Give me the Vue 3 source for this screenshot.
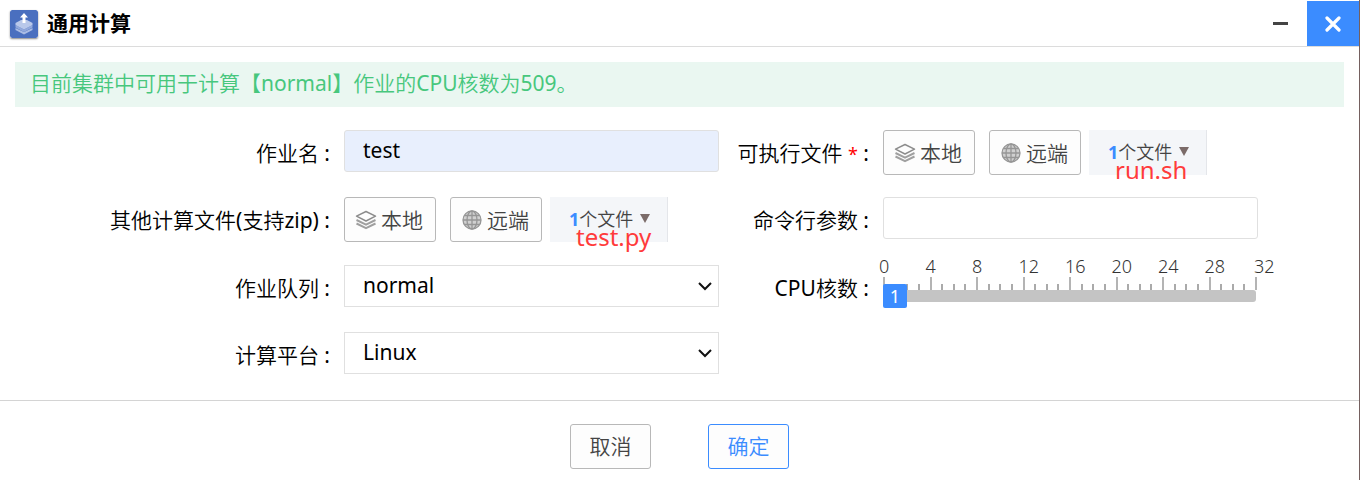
<script setup>
import { ref } from 'vue'

const jobName = ref('test')
const args = ref('')
const queue = ref('normal')
const platform = ref('Linux')
const cores = ref(1)
const marks = [0, 4, 8, 12, 16, 20, 24, 28]
</script>

<template>
  <main class="dialog">
    <header class="head">
      <svg class="logo" viewBox="0 0 28 28" aria-hidden="true">
        <rect width="28" height="28" rx="2" fill="#4a6fbf" />
        <path d="M5.500 18v2l8.500 4.500 8.500-4.500v-2L14 22z" fill="#a9bbe4" />
        <path d="M5.500 15v2.500L14 22l8.500-4.500V15L14 19.500z" fill="#92a9dc" />
        <path d="M5.500 13l5.500-3h6l5.500 3v2L14 19.500 5.500 15z" fill="#b9c8ea" />
        <path d="M14 3l4 4.500h-2.500V13h-3V7.500H10z" fill="#fff" />
      </svg>
      <h1>通用计算</h1>
      <button class="win min" type="button" aria-label="最小化">
        <svg viewBox="0 0 16 16"><path d="M0 7.500h15" stroke="#444" stroke-width="3" /></svg>
      </button>
      <button class="win close" type="button" aria-label="关闭">
        <svg viewBox="0 0 16 16"><path d="M2 2l12 12M14 2L2 14" stroke="#fff" stroke-width="3.200" stroke-linecap="round" /></svg>
      </button>
    </header>

    <p class="notice">目前集群中可用于计算【normal】作业的CPU核数为509。</p>

    <form id="job" class="form" @submit.prevent>
      <label class="label" for="name">作业名 :</label>
      <input id="name" v-model="jobName" class="field filled" type="text" />

      <span id="exec-label" class="label">可执行文件 <span class="star">*</span> :</span>
      <div class="files" role="group" aria-labelledby="exec-label">
        <button class="btn pick" type="button">
          <svg class="ico" viewBox="0 0 22 22" fill="none" stroke="#8d8d8d" stroke-width="1.500" stroke-linejoin="round"><path d="M11 2.500L20.500 7.200 11 12 1.500 7.200z" /><path d="M1.500 11l9.500 4.700 9.500-4.700M1.500 14.500l9.500 4.700 9.500-4.700" stroke-width="2" stroke="#a0a0a0" /></svg>本地
        </button>
        <button class="btn pick" type="button">
          <svg class="ico" viewBox="0 0 22 22" fill="none" stroke="#969696" stroke-width="1.300"><circle cx="11" cy="11" r="9" fill="#d0d0d0" /><path d="M11 2v18M2 11h18M3.500 6.500h15M3.500 15.500h15" /><ellipse cx="11" cy="11" rx="5" ry="9" /></svg>远端
        </button>
        <div class="chip">
          <button class="count" type="button"><b>1</b>个文件<svg class="tri" viewBox="0 0 10 9"><path d="M0 0h10L5 9z" fill="#7b6b69" /></svg></button>
          <span class="tag">run.sh</span>
        </div>
      </div>

      <span id="other-label" class="label">其他计算文件(支持zip) :</span>
      <div class="files" role="group" aria-labelledby="other-label">
        <button class="btn pick" type="button">
          <svg class="ico" viewBox="0 0 22 22" fill="none" stroke="#8d8d8d" stroke-width="1.500" stroke-linejoin="round"><path d="M11 2.500L20.500 7.200 11 12 1.500 7.200z" /><path d="M1.500 11l9.500 4.700 9.500-4.700M1.500 14.500l9.500 4.700 9.500-4.700" stroke-width="2" stroke="#a0a0a0" /></svg>本地
        </button>
        <button class="btn pick" type="button">
          <svg class="ico" viewBox="0 0 22 22" fill="none" stroke="#969696" stroke-width="1.300"><circle cx="11" cy="11" r="9" fill="#d0d0d0" /><path d="M11 2v18M2 11h18M3.500 6.500h15M3.500 15.500h15" /><ellipse cx="11" cy="11" rx="5" ry="9" /></svg>远端
        </button>
        <div class="chip">
          <button class="count" type="button"><b>1</b>个文件<svg class="tri" viewBox="0 0 10 9"><path d="M0 0h10L5 9z" fill="#7b6b69" /></svg></button>
          <span class="tag">test.py</span>
        </div>
      </div>

      <label class="label" for="args">命令行参数 :</label>
      <input id="args" v-model="args" class="field" type="text" />

      <label class="label" for="queue">作业队列 :</label>
      <div class="drop">
        <select id="queue" v-model="queue" class="field">
          <option>normal</option>
        </select>
        <svg class="chev" viewBox="0 0 14 10"><path d="M1 2l6 6 6-6" /></svg>
      </div>

      <label class="label" for="cores">CPU核数 :</label>
      <div class="slider">
        <div class="scale" aria-hidden="true">
          <div v-for="m in marks" :key="m" class="seg">
            <span class="num">{{ m }}</span>
            <div class="ticks"><i class="major"></i><i></i><i></i><i></i></div>
          </div>
          <div class="seg last">
            <span class="num">32</span>
            <div class="ticks"><i class="major"></i></div>
          </div>
        </div>
        <div class="rail">
          <input id="cores" v-model.number="cores" type="range" min="1" max="32" />
          <output class="value" for="cores" :style="{ left: `calc((100% - 24px) * ${(cores - 1) / 31})` }">{{ cores }}</output>
        </div>
      </div>

      <label class="label" for="platform">计算平台 :</label>
      <div class="drop">
        <select id="platform" v-model="platform" class="field">
          <option>Linux</option>
        </select>
        <svg class="chev" viewBox="0 0 14 10"><path d="M1 2l6 6 6-6" /></svg>
      </div>
    </form>

    <footer class="foot">
      <button class="btn" type="button">取消</button>
      <button class="btn primary" type="submit" form="job">确定</button>
    </footer>
  </main>
</template>

<style>
body {
  background: #fff;
}
</style>

<style scoped>
.dialog,
.dialog * {
  box-sizing: border-box;
}
.dialog {
  min-height: 100vh;
  border-right: 1px solid #75605f;
  background: #fff;
  color: #000;
  font-family: "Noto Sans", "Noto Sans CJK SC DemiLight", "Noto Sans CJK SC Light", "Noto Sans CJK SC", sans-serif;
  font-size: 21px;
  font-weight: 400;
  line-height: 30px;
}
button,
input,
select {
  margin: 0;
  font: inherit;
  color: inherit;
}
button {
  padding: 0;
  cursor: pointer;
}
.head {
  display: flex;
  align-items: center;
  height: 47px;
  padding: 1px 0 0 10px;
  border-bottom: 1px solid #dcdcdc;
}
.logo {
  width: 28px;
  height: 28px;
  border-radius: 2px;
  box-shadow: 0 1px 2px #888;
}
h1 {
  flex: 1;
  margin: 0 0 0 9px;
  padding-bottom: 2px;
  font-family: "Noto Sans", "Noto Sans CJK SC", sans-serif;
  font-size: 21px;
  font-weight: 700;
}
.win {
  display: flex;
  align-items: center;
  justify-content: center;
  width: 53px;
  height: 45px;
  border: 0;
  background: none;
}
.win svg {
  width: 16px;
  height: 16px;
}
.close {
  width: 52px;
  background: #3b8cff;
}
.notice {
  margin: 15px 15px 0;
  padding: 6px 15px 9px;
  background: #eaf7f1;
  color: #47c77d;
}
.form {
  display: grid;
  grid-template-columns: minmax(0, 344fr) minmax(0, 375fr) minmax(0, 164fr) minmax(0, 375fr) minmax(0, 101fr);
  grid-template-rows: 45px 46px 45px 45px;
  row-gap: 22px;
  padding: 23px 0;
}
.label {
  padding: 8px 14px 0 0;
  text-align: right;
  white-space: nowrap;
}
.form > .label:nth-child(4n + 1) {
  grid-column: 1;
}
.star {
  color: #f00;
  font-size: 18px;
}
.field {
  display: block;
  width: 100%;
  height: 42px;
  padding: 0 18px 2px;
  border: 1px solid #e0e0e0;
  border-radius: 3px;
  background: #fff;
  outline: 0;
}
.filled {
  background: #e8effd;
}
.drop {
  position: relative;
}
select.field {
  appearance: none;
  padding: 0 36px 2px 18px;
  border-radius: 0;
}
.chev {
  position: absolute;
  top: 16px;
  right: 7px;
  width: 14px;
  height: 10px;
  fill: none;
  stroke: #111;
  stroke-width: 2;
  pointer-events: none;
}
.files {
  display: flex;
}
.btn {
  height: 45px;
  padding-bottom: 2px;
  border: 1px solid #b8b8b8;
  border-radius: 3px;
  background: #fdfdfd;
  color: #444;
}
.pick {
  display: flex;
  align-items: center;
  padding: 0 0 0 10px;
  gap: 4px;
  width: 92px;
}
.pick + .pick {
  margin-left: 14px;
}
.ico {
  width: 22px;
  height: 22px;
}
.chip {
  position: relative;
  width: 118px;
  margin-left: 8px;
}
.count {
  display: flex;
  align-items: center;
  width: 100%;
  height: 45px;
  padding: 0 0 2px 19px;
  border: 0;
  border-right: 1px solid #e4e6ea;
  background: #f4f6f9;
  color: #444;
  font-size: 18px;
}
.count b {
  color: #3b8cff;
  font-weight: 700;
}
.tri {
  width: 10px;
  height: 9px;
  margin-left: 7px;
}
.tag {
  position: absolute;
  top: 25px;
  left: 26px;
  color: #ff3b3b;
  font-size: 24px;
}
.slider {
  margin-top: -9px;
}
.scale {
  display: flex;
  margin-right: 2px;
}
.seg {
  flex: 1;
}
.last {
  flex: none;
  width: 1px;
}
.num {
  display: block;
  margin-left: -4px;
  color: #333;
  font-size: 18px;
  font-weight: 300;
  line-height: 21px;
}
.last .num {
  margin-left: -1px;
}
.ticks {
  display: flex;
  align-items: flex-end;
  height: 13px;
}
.ticks i {
  flex: 1;
  height: 6px;
  border-left: 2px solid #aaa;
}
.ticks .major {
  height: 13px;
  border-color: #b4b4b4;
}
.rail {
  position: relative;
  height: 12px;
  margin-right: 2px;
}
.rail input {
  display: block;
  width: 100%;
  height: 12px;
  appearance: none;
  border-radius: 3px;
  background: #c4c4c4;
  outline: 0;
}
.rail input::-webkit-slider-thumb {
  appearance: none;
  width: 24px;
  height: 24px;
  border-radius: 2px;
  background: #3b8cff;
}
.value {
  position: absolute;
  top: -6px;
  width: 24px;
  color: #fff;
  font-size: 18px;
  line-height: 24px;
  text-align: center;
  pointer-events: none;
}
.foot {
  display: flex;
  justify-content: center;
  gap: 57px;
  padding: 23px 0 11px;
  border-top: 1px solid #d4d4d4;
}
.foot .btn {
  width: 81px;
}
.foot .primary {
  border-color: #3b8cff;
  color: #3b8cff;
}
</style>
